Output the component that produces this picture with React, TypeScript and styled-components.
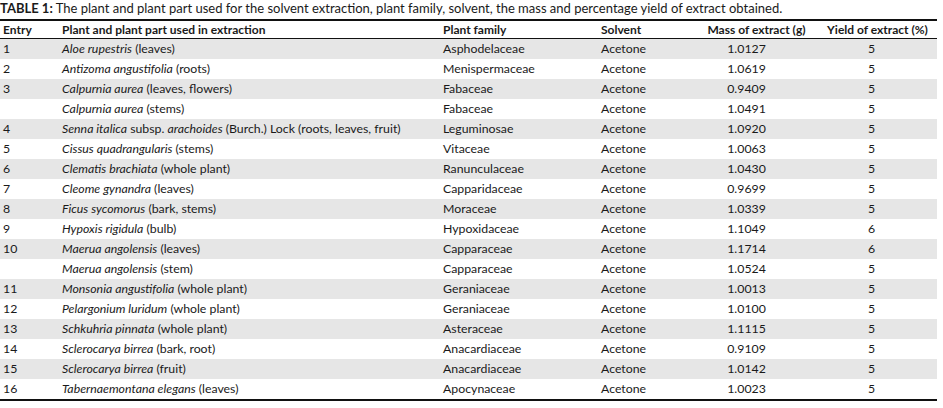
import React from 'react';
import styled, { createGlobalStyle } from 'styled-components';

const GlobalStyle = createGlobalStyle`
  body {
    margin: 0;
    background: #fff;
    font-family: Lato, 'Open Sans', sans-serif;
    color: #1a1a1a;
  }
`;

const Wrapper = styled.div`
  width: 937px;
`;

const Caption = styled.div`
  height: 19px;
  font-size: 13px;
  line-height: 17px;
  color: #1a1a1a;
  white-space: nowrap;
`;

const Table = styled.table`
  width: 100%;
  border-collapse: collapse;
  table-layout: fixed;
  border-top: 2px solid #111;
  border-bottom: 2px solid #111;
  font-size: 12.3px;
`;

const HeadRow = styled.tr`
  height: 17px;
  border-bottom: 1px solid #111;
`;

const Th = styled.th<{ $align?: 'left' | 'center'; $pr?: number }>`
  padding: 0 ${({ $pr }) => $pr ?? 3}px 0 3px;
  text-align: ${({ $align }) => $align || 'left'};
  font-size: 12px;
  font-weight: 700;
  line-height: 17px;
  white-space: nowrap;
`;

const Row = styled.tr<{ $shaded: boolean }>`
  height: 20px;
  background: ${({ $shaded }) => ($shaded ? '#e6e6e6' : '#fff')};
`;

const Td = styled.td<{ $align?: 'left' | 'center'; $pr?: number }>`
  padding: 0 ${({ $pr }) => $pr ?? 3}px 0 3px;
  text-align: ${({ $align }) => $align || 'left'};
  line-height: 20px;
  white-space: nowrap;
`;

type Entry = {
  no: string;
  plant: React.ReactNode;
  family: string;
  mass: string;
  yieldPct: string;
};

const rows: Entry[] = [
  { no: '1', plant: <><i>Aloe rupestris</i> (leaves)</>, family: 'Asphodelaceae', mass: '1.0127', yieldPct: '5' },
  { no: '2', plant: <><i>Antizoma angustifolia</i> (roots)</>, family: 'Menispermaceae', mass: '1.0619', yieldPct: '5' },
  { no: '3', plant: <><i>Calpurnia aurea</i> (leaves, flowers)</>, family: 'Fabaceae', mass: '0.9409', yieldPct: '5' },
  { no: '', plant: <><i>Calpurnia aurea</i> (stems)</>, family: 'Fabaceae', mass: '1.0491', yieldPct: '5' },
  {
    no: '4',
    plant: <><i>Senna italica</i> subsp. <i>arachoides</i> (Burch.) Lock (roots, leaves, fruit)</>,
    family: 'Leguminosae',
    mass: '1.0920',
    yieldPct: '5',
  },
  { no: '5', plant: <><i>Cissus quadrangularis</i> (stems)</>, family: 'Vitaceae', mass: '1.0063', yieldPct: '5' },
  { no: '6', plant: <><i>Clematis brachiata</i> (whole plant)</>, family: 'Ranunculaceae', mass: '1.0430', yieldPct: '5' },
  { no: '7', plant: <><i>Cleome gynandra</i> (leaves)</>, family: 'Capparidaceae', mass: '0.9699', yieldPct: '5' },
  { no: '8', plant: <><i>Ficus sycomorus</i> (bark, stems)</>, family: 'Moraceae', mass: '1.0339', yieldPct: '5' },
  { no: '9', plant: <><i>Hypoxis rigidula</i> (bulb)</>, family: 'Hypoxidaceae', mass: '1.1049', yieldPct: '6' },
  { no: '10', plant: <><i>Maerua angolensis</i> (leaves)</>, family: 'Capparaceae', mass: '1.1714', yieldPct: '6' },
  { no: '', plant: <><i>Maerua angolensis</i> (stem)</>, family: 'Capparaceae', mass: '1.0524', yieldPct: '5' },
  { no: '11', plant: <><i>Monsonia angustifolia</i> (whole plant)</>, family: 'Geraniaceae', mass: '1.0013', yieldPct: '5' },
  { no: '12', plant: <><i>Pelargonium luridum</i> (whole plant)</>, family: 'Geraniaceae', mass: '1.0100', yieldPct: '5' },
  { no: '13', plant: <><i>Schkuhria pinnata</i> (whole plant)</>, family: 'Asteraceae', mass: '1.1115', yieldPct: '5' },
  { no: '14', plant: <><i>Sclerocarya birrea</i> (bark, root)</>, family: 'Anacardiaceae', mass: '0.9109', yieldPct: '5' },
  { no: '15', plant: <><i>Sclerocarya birrea</i> (fruit)</>, family: 'Anacardiaceae', mass: '1.0142', yieldPct: '5' },
  { no: '16', plant: <><i>Tabernaemontana elegans</i> (leaves)</>, family: 'Apocynaceae', mass: '1.0023', yieldPct: '5' },
];

export default function App() {
  return (
    <Wrapper>
      <GlobalStyle />
      <Caption>
        <b>TABLE 1:</b> The plant and plant part used for the solvent extraction, plant family, solvent, the mass and
        percentage yield of extract obtained.
      </Caption>
      <Table>
        <colgroup>
          <col style={{ width: 59 }} />
          <col style={{ width: 381 }} />
          <col style={{ width: 158 }} />
          <col style={{ width: 97 }} />
          <col style={{ width: 123 }} />
          <col style={{ width: 119 }} />
        </colgroup>
        <thead>
          <HeadRow>
            <Th>Entry</Th>
            <Th>Plant and plant part used in extraction</Th>
            <Th>Plant family</Th>
            <Th>Solvent</Th>
            <Th $align="center">Mass of extract (g)</Th>
            <Th $align="center">Yield of extract (%)</Th>
          </HeadRow>
        </thead>
        <tbody>
          {rows.map((r, i) => (
            <Row key={i} $shaded={i % 2 === 0}>
              <Td>{r.no}</Td>
              <Td>{r.plant}</Td>
              <Td>{r.family}</Td>
              <Td>Acetone</Td>
              <Td $align="center" $pr={23}>{r.mass}</Td>
              <Td $align="center" $pr={15}>{r.yieldPct}</Td>
            </Row>
          ))}
        </tbody>
      </Table>
    </Wrapper>
  );
}
